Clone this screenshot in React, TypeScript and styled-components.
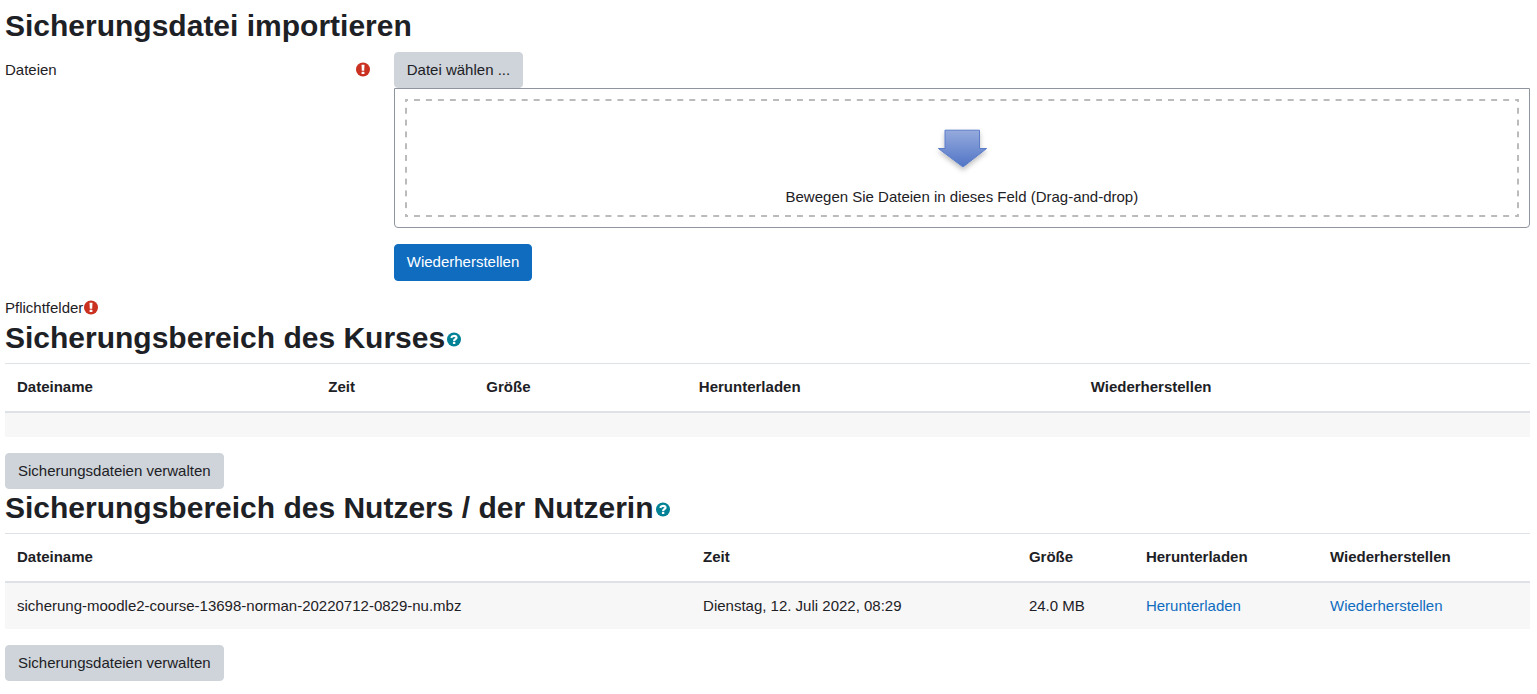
import React from "react";
import styled, { createGlobalStyle } from "styled-components";

const GlobalStyle = createGlobalStyle`
  *, *::before, *::after { box-sizing: border-box; }
  body {
    margin: 0;
    background: #fff;
    color: #1d2125;
    font-family: "Liberation Sans", Arial, sans-serif;
    font-size: 15px;
    line-height: 22px;
  }
`;

const Page = styled.main`
  padding: 8px 7px 12px 5px;
`;

const Heading = styled.h2`
  margin: 0 0 7px;
  font-size: 30px;
  font-weight: 700;
  line-height: 36px;
`;

const Form = styled.form`
  padding-top: 1px;
`;

const Section = styled.section`
  padding-top: 1px;
`;

const FormRow = styled.div`
  display: grid;
  grid-template-columns: minmax(0, 1fr) minmax(0, 3fr);
  column-gap: 10px;
  margin-bottom: 16px;
`;

const LabelCell = styled.div`
  display: flex;
  align-items: flex-start;
  justify-content: space-between;
  padding: 7px 13px 0 0;
`;

const FieldCell = styled.div`
  grid-column: 2;
`;

const Button = styled.button<{ $primary?: boolean }>`
  display: block;
  padding: ${(p) => (p.$primary ? "6px 12px 7px" : "6px 12px")};
  border: 1px solid ${(p) => (p.$primary ? "#0f6cbf" : "#ced4da")};
  border-radius: 4px;
  background: ${(p) => (p.$primary ? "#0f6cbf" : "#ced4da")};
  color: ${(p) => (p.$primary ? "#fff" : "#1d2125")};
  font: inherit;
  cursor: pointer;
`;

const DropZone = styled.div`
  padding: 10px;
  border: 1px solid #8f959e;
  border-radius: 0 0 4px 4px;
`;

const dash = "#bbb 0 24%, transparent 24% 76%, #bbb 76%";

/* The dashed frame is painted as tiles, so that every corner gets a full dash. */
const DropTarget = styled.div`
  display: flex;
  flex-direction: column;
  align-items: center;
  gap: 8px;
  padding: 26px 2px 9px;
  background:
    linear-gradient(90deg, ${dash}) top left / 12px 2px round no-repeat,
    linear-gradient(90deg, ${dash}) bottom left / 12px 2px round no-repeat,
    linear-gradient(${dash}) top left / 2px 12px no-repeat round,
    linear-gradient(${dash}) top right / 2px 12px no-repeat round;
  text-align: center;
`;

const RequiredNote = styled.div`
  display: flex;
  align-items: center;
`;

const Icon = styled.svg<{ $tone: "danger" | "info" }>`
  display: block;
  flex: none;
  width: 16px;
  height: 16px;
  color: ${(p) => (p.$tone === "danger" ? "#ca3120" : "#008196")};
`;

const RequiredBadge = styled.span`
  display: flex;
  align-items: center;
  height: 22px;
`;

const HelpButton = styled.button`
  display: inline-block;
  margin-left: 1px;
  padding: 0;
  border: 0;
  background: none;
  line-height: 16px;
  cursor: pointer;
  vertical-align: baseline;
`;

const Table = styled.table`
  width: 100%;
  margin-bottom: 16px;
  border-spacing: 0;
`;

const HeaderCell = styled.th`
  padding: 12px 12px 13px;
  border-top: 1px solid #dee2e6;
  border-bottom: 2px solid #dee2e6;
  text-align: left;
`;

const Cell = styled.td`
  padding: 12px;
  background: #f7f7f7;
`;

const EmptyCell = styled(Cell)`
  height: 24px;
`;

const Link = styled.a`
  color: #0f6cbf;
  text-decoration: none;
`;

function RequiredIcon() {
  return (
    <RequiredBadge>
      <Icon $tone="danger" viewBox="0 0 16 16" role="img" aria-label="Pflichtfeld">
        <circle cx="8" cy="7.5" r="7" fill="currentColor" />
        <path d="M6.500 2.800H9.500L9.200 8.700H6.800Z" fill="#fff" />
        <rect x="6.600" y="9.700" width="2.800" height="2.300" rx="0.300" fill="#fff" />
      </Icon>
    </RequiredBadge>
  );
}

function Help({ topic }: { topic: string }) {
  return (
    <HelpButton type="button" aria-label={`Hilfe zu ${topic}`}>
      <Icon $tone="info" viewBox="0 0 16 16" aria-hidden="true">
        <circle cx="8" cy="7.5" r="7" fill="currentColor" />
        <path
          d="M5.200 5.900C5.700 4.500 6.700 3.900 8 3.900C9.500 3.900 10.500 4.600 10.500 5.700C10.500 7.200 8.100 7.200 8.100 9"
          fill="none"
          stroke="#fff"
          strokeWidth="2.2"
        />
        <rect x="6.900" y="9.800" width="2.400" height="2.300" rx="0.300" fill="#fff" />
      </Icon>
    </HelpButton>
  );
}

function DropArrow() {
  return (
    <svg width="60" height="53" viewBox="0 0 60 53" aria-hidden="true">
      <defs>
        <linearGradient id="arrowFill" x1="0" y1="0" x2="0" y2="1">
          <stop offset="0" stopColor="#96abdd" />
          <stop offset="1" stopColor="#5074c6" />
        </linearGradient>
        <filter id="arrowShadow" x="-20%" y="-20%" width="140%" height="150%">
          <feDropShadow dx="0" dy="3" stdDeviation="2.5" floodColor="#000" floodOpacity="0.25" />
        </filter>
      </defs>
      <path
        d="M13 5.200H47.500V23.500H54.600L31 42L6.400 23.500H13Z"
        fill="url(#arrowFill)"
        stroke="#5b7cc9"
        filter="url(#arrowShadow)"
      />
    </svg>
  );
}

interface BackupFile {
  name: string;
  time: string;
  size: string;
}

const columns = ["Dateiname", "Zeit", "Größe", "Herunterladen", "Wiederherstellen"];

const userFiles: BackupFile[] = [
  {
    name: "sicherung-moodle2-course-13698-norman-20220712-0829-nu.mbz",
    time: "Dienstag, 12. Juli 2022, 08:29",
    size: "24.0 MB",
  },
];

function BackupArea({ title, files }: { title: string; files: BackupFile[] }) {
  return (
    <Section>
      <Heading>
        {title}
        <Help topic={title} />
      </Heading>
      <Table aria-label={title}>
        <thead>
          <tr>
            {columns.map((column) => (
              <HeaderCell key={column} scope="col">
                {column}
              </HeaderCell>
            ))}
          </tr>
        </thead>
        <tbody>
          {files.length === 0 && (
            <tr>
              {columns.map((column) => (
                <EmptyCell key={column} />
              ))}
            </tr>
          )}
          {files.map((file) => (
            <tr key={file.name}>
              <Cell>{file.name}</Cell>
              <Cell>{file.time}</Cell>
              <Cell>{file.size}</Cell>
              <Cell>
                <Link href="#download">Herunterladen</Link>
              </Cell>
              <Cell>
                <Link href="#restore">Wiederherstellen</Link>
              </Cell>
            </tr>
          ))}
        </tbody>
      </Table>
      <Button type="button">Sicherungsdateien verwalten</Button>
    </Section>
  );
}

export default function App() {
  return (
    <>
      <GlobalStyle />
      <Page>
        <Heading>Sicherungsdatei importieren</Heading>
        <Form onSubmit={(event) => event.preventDefault()}>
          <FormRow>
            <LabelCell>
              <label htmlFor="file-picker">Dateien</label>
              <RequiredIcon />
            </LabelCell>
            <FieldCell>
              <Button type="button" id="file-picker">
                Datei wählen ...
              </Button>
              <DropZone>
                <DropTarget>
                  <DropArrow />
                  <span>Bewegen Sie Dateien in dieses Feld (Drag-and-drop)</span>
                </DropTarget>
              </DropZone>
            </FieldCell>
          </FormRow>
          <FormRow>
            <FieldCell>
              <Button type="submit" $primary>
                Wiederherstellen
              </Button>
            </FieldCell>
          </FormRow>
          <RequiredNote>
            Pflichtfelder
            <RequiredIcon />
          </RequiredNote>
        </Form>
        <BackupArea title="Sicherungsbereich des Kurses" files={[]} />
        <BackupArea title="Sicherungsbereich des Nutzers / der Nutzerin" files={userFiles} />
      </Page>
    </>
  );
}
